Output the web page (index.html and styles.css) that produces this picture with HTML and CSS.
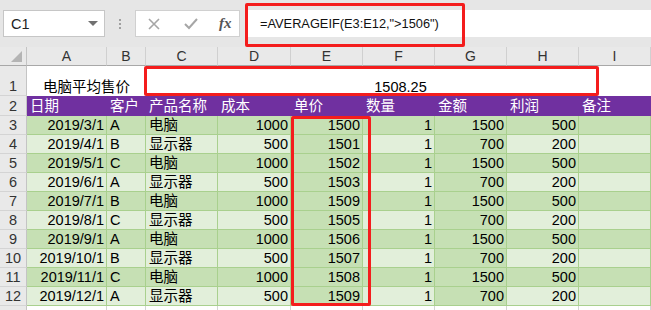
FILE: index.html
```html
<!DOCTYPE html>
<html lang="zh">
<head>
<meta charset="utf-8">
<link rel="stylesheet" href="styles.css">
</head>
<body>
<div class="app">
  <div class="fbar">
    <div class="namebox"><span>C1</span><span class="dd"></span></div>
    <div class="vdots"><i></i><i></i><i></i></div>
    <div class="fxbox">
      <svg class="ico" width="14" height="14" viewBox="0 0 14 14"><path d="M2 2 L12 12 M12 2 L2 12" stroke="#a6a6a6" stroke-width="1.6" fill="none"/></svg>
      <svg class="ico" width="16" height="14" viewBox="0 0 16 14"><path d="M2 7 L6 11 L14 2" stroke="#a6a6a6" stroke-width="2" fill="none"/></svg>
      <span class="fx">fx</span>
    </div>
    <div class="finput">=AVERAGEIF(E3:E12,"&gt;1506")</div>
  </div>
  <div class="sheet">
    <div class="corner"><span class="tri"></span></div>
    <div class="ch">A</div><div class="ch">B</div><div class="ch">C</div><div class="ch">D</div><div class="ch">E</div><div class="ch">F</div><div class="ch">G</div><div class="ch">H</div><div class="ch">I</div>

    <div class="rh">1</div>
    <div class="w ctr span2">电脑平均售价</div>
    <div class="w ctr span7">1508.25</div>

    <div class="rh">2</div>
    <div class="hd">日期</div><div class="hd">客户</div><div class="hd">产品名称</div><div class="hd">成本</div><div class="hd">单价</div><div class="hd">数量</div><div class="hd">金额</div><div class="hd">利润</div><div class="hd">备注</div>

    <div class="rh">3</div>
    <div class="d n">2019/3/1</div><div class="d">A</div><div class="d">电脑</div><div class="d n">1000</div><div class="d n">1500</div><div class="d n">1</div><div class="d n">1500</div><div class="d n">500</div><div class="d"></div>
    <div class="rh">4</div>
    <div class="l n">2019/4/1</div><div class="l">B</div><div class="l">显示器</div><div class="l n">500</div><div class="d n">1501</div><div class="l n">1</div><div class="d n">700</div><div class="l n">200</div><div class="l"></div>
    <div class="rh">5</div>
    <div class="d n">2019/5/1</div><div class="d">C</div><div class="d">电脑</div><div class="d n">1000</div><div class="d n">1502</div><div class="d n">1</div><div class="d n">1500</div><div class="d n">500</div><div class="d"></div>
    <div class="rh">6</div>
    <div class="l n">2019/6/1</div><div class="l">A</div><div class="l">显示器</div><div class="l n">500</div><div class="d n">1503</div><div class="l n">1</div><div class="d n">700</div><div class="l n">200</div><div class="l"></div>
    <div class="rh">7</div>
    <div class="d n">2019/7/1</div><div class="d">B</div><div class="d">电脑</div><div class="d n">1000</div><div class="d n">1509</div><div class="d n">1</div><div class="d n">1500</div><div class="d n">500</div><div class="d"></div>
    <div class="rh">8</div>
    <div class="l n">2019/8/1</div><div class="l">C</div><div class="l">显示器</div><div class="l n">500</div><div class="d n">1505</div><div class="l n">1</div><div class="d n">700</div><div class="l n">200</div><div class="l"></div>
    <div class="rh">9</div>
    <div class="d n">2019/9/1</div><div class="d">A</div><div class="d">电脑</div><div class="d n">1000</div><div class="d n">1506</div><div class="d n">1</div><div class="d n">1500</div><div class="d n">500</div><div class="d"></div>
    <div class="rh">10</div>
    <div class="l n">2019/10/1</div><div class="l">B</div><div class="l">显示器</div><div class="l n">500</div><div class="d n">1507</div><div class="l n">1</div><div class="d n">700</div><div class="l n">200</div><div class="l"></div>
    <div class="rh">11</div>
    <div class="d n">2019/11/1</div><div class="d">C</div><div class="d">电脑</div><div class="d n">1000</div><div class="d n">1508</div><div class="d n">1</div><div class="d n">1500</div><div class="d n">500</div><div class="d"></div>
    <div class="rh">12</div>
    <div class="l n">2019/12/1</div><div class="l">A</div><div class="l">显示器</div><div class="l n">500</div><div class="d n">1509</div><div class="l n">1</div><div class="d n">700</div><div class="l n">200</div><div class="l"></div>

    <div class="rh"></div>
    <div class="e"></div><div class="e"></div><div class="e"></div><div class="e"></div><div class="e"></div><div class="e"></div><div class="e"></div><div class="e"></div><div class="e"></div>
  </div>
  <div class="mark mark-formula"></div>
  <div class="mark mark-row1"></div>
  <div class="mark mark-col"></div>
</div>
</body>
</html>
```
FILE: styles.css
```css
* { box-sizing: border-box; margin: 0; padding: 0; }
html, body { width: 651px; height: 310px; overflow: hidden; background: #fff; }
body { font-family: "Liberation Sans", "Noto Sans CJK SC", sans-serif; color: #000; }
.app { position: relative; width: 651px; height: 310px; overflow: hidden; }

.fbar { height: 47px; background: #e6e6e6; display: flex; align-items: flex-start; padding-top: 10px; padding-left: 3px; }
.namebox { width: 102px; height: 27px; background: #fff; border: 1px solid #c6c6c6; display: flex; align-items: center; justify-content: space-between; padding: 0 6px 0 7px; font-size: 14.5px; color: #222; }
.dd { width: 0; height: 0; border-left: 5px solid transparent; border-right: 5px solid transparent; border-top: 5px solid #707070; }
.vdots { width: 30px; height: 27px; display: flex; flex-direction: column; align-items: center; justify-content: center; gap: 2px; }
.vdots i { display: block; width: 2px; height: 2px; background: #a0a0a0; }
.fxbox { width: 105px; height: 27px; background: #fff; border: 1px solid #d0d0d0; display: flex; align-items: center; padding-left: 11px; gap: 22px; }
.fx { font-family: "Liberation Serif", serif; font-style: italic; font-size: 15px; color: #555; font-weight: bold; margin-left: -2px; }
.finput { flex: 1; height: 27px; margin-left: 5px; background: #fff; display: flex; align-items: center; padding-left: 15px; font-size: 12.8px; color: #111; }

.sheet { display: grid; grid-template-columns: 27px 80px 39px 72px 73px 72px 72px 72px 72px 72px; grid-template-rows: 19px 30px 20px repeat(10, 19px) 19px; }
.sheet > div { font-size: 14.5px; line-height: 17px; white-space: nowrap; overflow: hidden; }
.corner { background: #e9e9e9; border-right: 1px solid #c4c4c4; border-bottom: 1px solid #a8a8a8; position: relative; }
.tri { position: absolute; right: 4px; bottom: 3px; width: 0; height: 0; border-left: 11px solid transparent; border-bottom: 11px solid #b4b4b4; }
.ch { background: #e9e9e9; border-right: 1px solid #d0d0d0; border-bottom: 1px solid #a8a8a8; text-align: center; color: #333; font-size: 14px !important; padding-top: 1px; }
.rh { background: #e9e9e9; border-right: 1px solid #c4c4c4; border-bottom: 1px solid #d4d4d4; text-align: center; color: #333; display: flex; align-items: flex-end; justify-content: center; padding-bottom: 0; }
.w { background: #fff; display: flex; align-items: flex-end; justify-content: center; padding-bottom: 0; }
.span2 { grid-column: span 2; }
.span7 { grid-column: span 7; padding-left: 4px; }
.hd { background: #7030a0; color: #fff; display: flex; align-items: flex-end; padding-left: 3px; padding-bottom: 1px; }
.d, .l { border-right: 1px solid #a9d08e; border-bottom: 1px solid #a9d08e; display: flex; align-items: flex-end; padding-left: 3px; padding-right: 2px; padding-bottom: 0; }
.d { background: #c6e0b4; }
.l { background: #e2efda; }
.n { justify-content: flex-end; }
.e { border-right: 1px solid #d4d4d4; background: #fff; }

.mark { position: absolute; border: 3px solid #f41d1d; border-radius: 2px; pointer-events: none; }
.mark-formula { left: 245px; top: 3px; width: 220px; height: 44px; }
.mark-row1 { left: 144px; top: 66px; width: 455px; height: 30px; }
.mark-col { left: 291px; top: 116px; width: 80px; height: 190px; }
```
